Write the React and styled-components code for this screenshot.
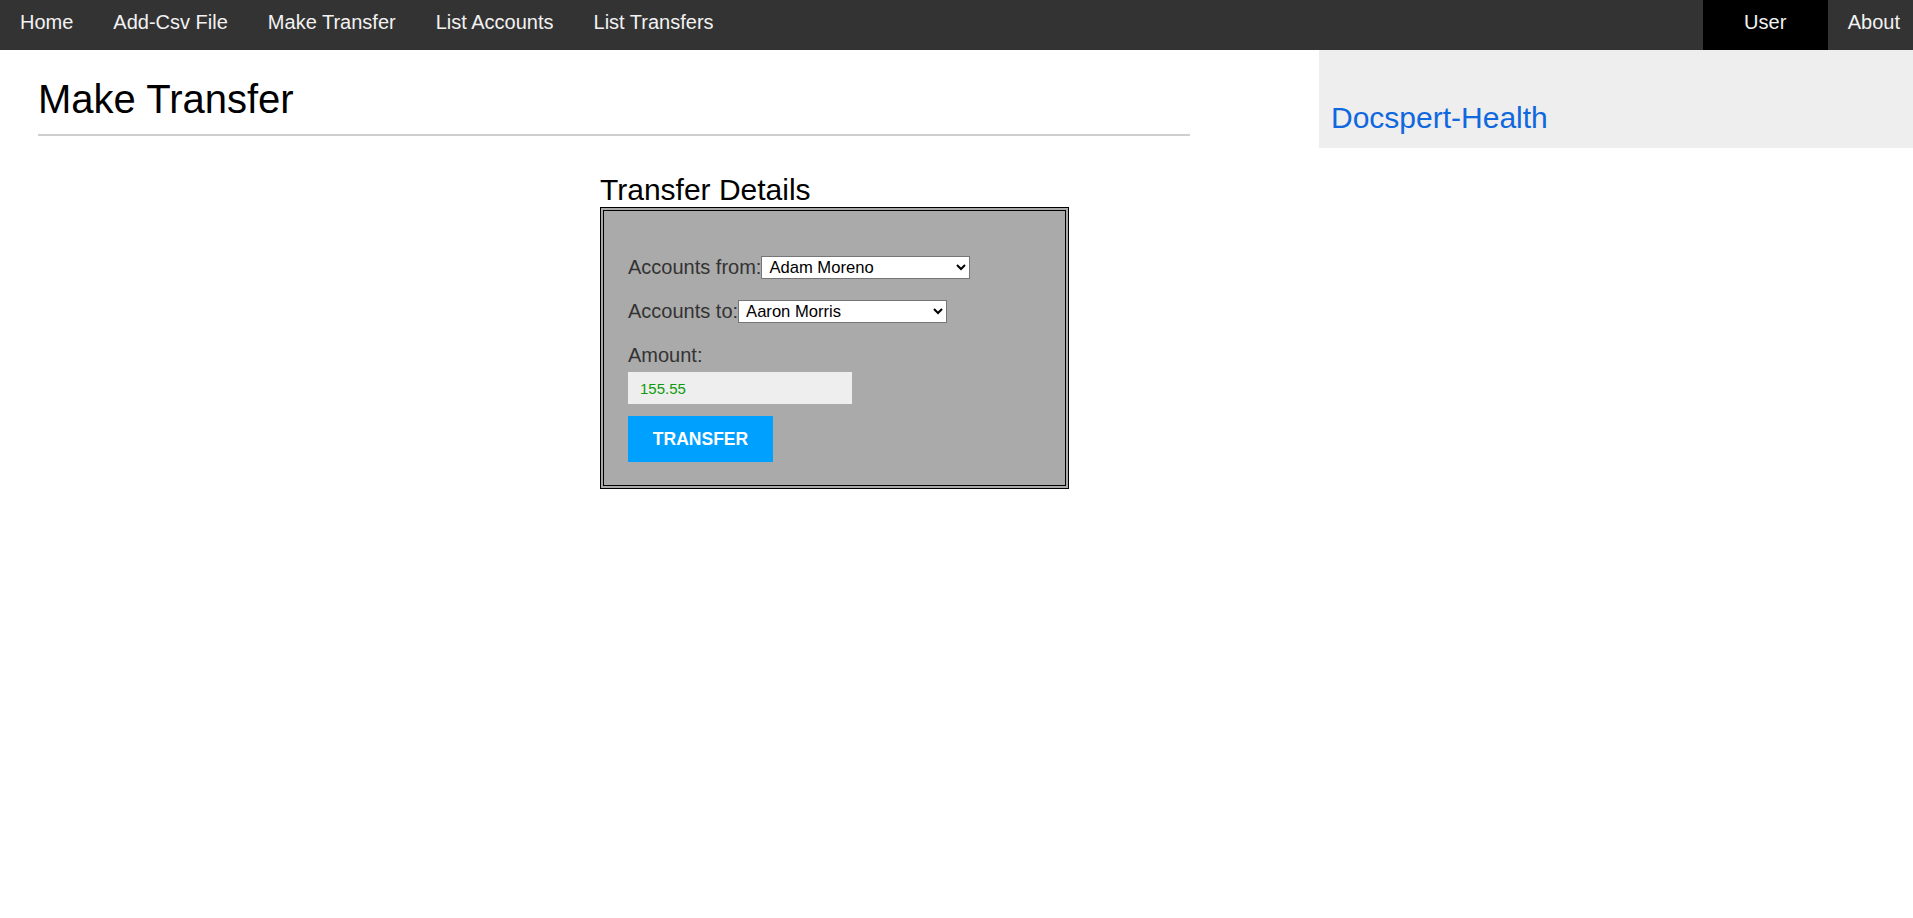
import React, { useState } from 'react';
import styled, { createGlobalStyle } from 'styled-components';

const GlobalStyle = createGlobalStyle`
  body {
    margin: 0;
    font-family: "Liberation Sans", Arial, sans-serif;
    background: #fff;
    color: #000;
  }
`;

const TopNav = styled.nav`
  display: flex;
  height: 50px;
  background-color: #333;
  overflow: hidden;
`;

const NavLink = styled.a`
  display: block;
  height: 50px;
  line-height: 45px;
  padding: ${props => props.last ? '0 13px 0 20px' : '0 20px'};
  font-size: 20px;
  color: #f2f2f2;
  text-decoration: none;
  cursor: pointer;
`;

const UserLink = styled(NavLink)`
  margin-left: auto;
  width: 125px;
  padding: 0;
  text-align: center;
  background-color: #000;
`;

const Layout = styled.div`
  display: flex;
  align-items: flex-start;
`;

const Main = styled.main`
  width: 1228px;
  padding: 0 38px;
  box-sizing: border-box;
`;

const PageTitle = styled.h1`
  margin: 27px 0 0;
  padding-bottom: 12px;
  font-size: 40px;
  font-weight: normal;
  line-height: 45px;
  border-bottom: 2px solid #cfcfcf;
`;

const FormSection = styled.section`
  margin: 37px 0 0 562px;
  width: 469px;
`;

const SectionTitle = styled.h2`
  margin: 0;
  font-size: 30px;
  font-weight: normal;
  line-height: 34px;
`;

const FormBox = styled.form`
  display: flex;
  flex-direction: column;
  align-items: flex-start;
  box-sizing: border-box;
  height: 282px;
  padding: 45px 24px 0;
  background-color: #aaa;
  border: 4px double #000;
`;

const Row = styled.div`
  display: flex;
  align-items: center;
  height: 23px;
  margin-bottom: ${props => props.gap || 0}px;
`;

const Label = styled.label`
  font-size: 20px;
  line-height: 23px;
  color: #333;
`;

const Select = styled.select`
  width: 209px;
  height: 23px;
  padding: 0 3px;
  font-family: "Liberation Sans", Arial, sans-serif;
  font-size: 16.6px;
  color: #000;
  background-color: #fff;
  border: 1px solid #767676;
  border-radius: 0;
`;

const AmountInput = styled.input`
  width: 224px;
  height: 32px;
  margin-top: 5px;
  padding: 0 12px;
  box-sizing: border-box;
  font-family: "Liberation Sans", Arial, sans-serif;
  font-size: 15px;
  color: #0d9a0d;
  background-color: #eee;
  border: none;
  outline: none;
`;

const SubmitButton = styled.button`
  width: 145px;
  height: 46px;
  margin-top: 12px;
  padding: 0;
  font-family: "Liberation Sans", Arial, sans-serif;
  font-size: 17.5px;
  font-weight: bold;
  color: #fff;
  background-color: #00a0ff;
  border: none;
  cursor: pointer;
`;

const Sidebar = styled.aside`
  margin-left: auto;
  width: 594px;
  height: 98px;
  padding: 51px 0 0 12px;
  box-sizing: border-box;
  background-color: #eee;
`;

const BrandLink = styled.a`
  font-size: 30px;
  line-height: 34px;
  color: #1068de;
  text-decoration: none;
`;

const accounts = ['Aaron Morris', 'Adam Moreno', 'Alice Walker', 'Brian Cole'];

const App = () => {
  const [from, setFrom] = useState('Adam Moreno');
  const [to, setTo] = useState('Aaron Morris');
  const [amount, setAmount] = useState('155.55');

  return (
    <>
      <GlobalStyle />
      <TopNav>
        <NavLink>Home</NavLink>
        <NavLink>Add-Csv File</NavLink>
        <NavLink>Make Transfer</NavLink>
        <NavLink>List Accounts</NavLink>
        <NavLink>List Transfers</NavLink>
        <UserLink>User</UserLink>
        <NavLink last>About</NavLink>
      </TopNav>
      <Layout>
        <Main>
          <PageTitle>Make Transfer</PageTitle>
          <FormSection>
            <SectionTitle>Transfer Details</SectionTitle>
            <FormBox onSubmit={e => e.preventDefault()}>
              <Row gap={21}>
                <Label htmlFor="from">Accounts from:</Label>
                <Select id="from" value={from} onChange={e => setFrom(e.target.value)}>
                  {accounts.map(a => <option key={a}>{a}</option>)}
                </Select>
              </Row>
              <Row gap={21}>
                <Label htmlFor="to">Accounts to:</Label>
                <Select id="to" value={to} onChange={e => setTo(e.target.value)}>
                  {accounts.map(a => <option key={a}>{a}</option>)}
                </Select>
              </Row>
              <Row>
                <Label htmlFor="amount">Amount:</Label>
              </Row>
              <AmountInput id="amount" value={amount} onChange={e => setAmount(e.target.value)} />
              <SubmitButton type="submit">TRANSFER</SubmitButton>
            </FormBox>
          </FormSection>
        </Main>
        <Sidebar>
          <BrandLink>Docspert-Health</BrandLink>
        </Sidebar>
      </Layout>
    </>
  );
};

export default App;
